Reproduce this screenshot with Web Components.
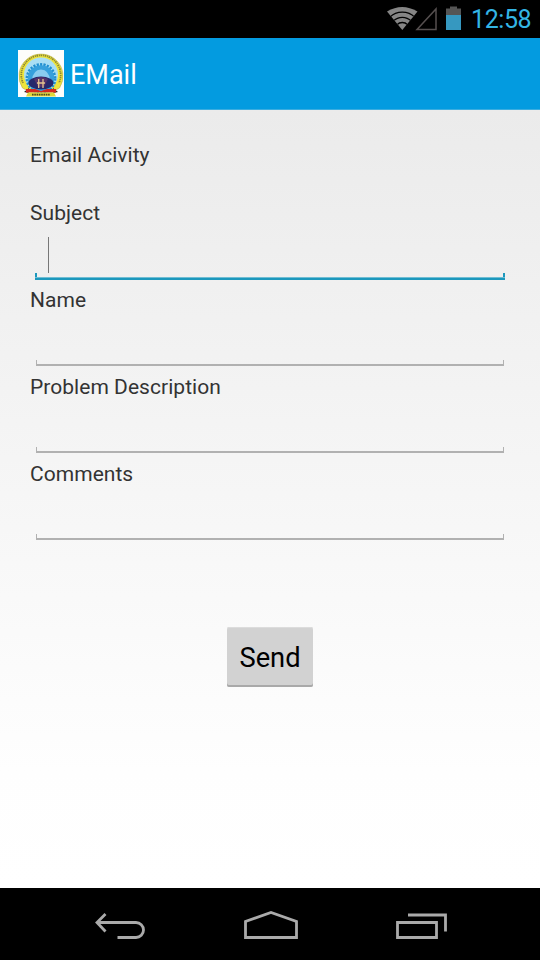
<!DOCTYPE html>
<html lang="en">
<head>
<meta charset="utf-8">
<title>EMail</title>
<style>
html,body{margin:0;width:540px;height:960px;overflow:hidden;background:#000;font-family:Roboto,"Noto Sans",sans-serif}
</style>
</head>
<body>
<email-screen></email-screen>
<script>
function define(name, html) {
  const t = document.createElement('template');
  t.innerHTML = html;
  customElements.define(name, class extends HTMLElement {
    constructor() {
      super();
      this.attachShadow({ mode: 'open' }).append(t.content.cloneNode(true));
    }
  });
}

define('status-bar', `
<style>
:host{display:flex;height:38px;box-sizing:border-box;justify-content:flex-end;background:#000;color:#33b5e5;padding-right:9px}
svg{display:block}
span{font-size:25px;line-height:40px;letter-spacing:-.4px;width:60px;white-space:nowrap}
</style>
<svg width="85" height="38" viewBox="386 0 85 38">
  <defs><clipPath id="w"><path d="M402.300 30L387 11.500Q402 2.500 417.500 11.500Z"/></clipPath></defs>
  <g clip-path="url(#w)"><rect x="386" y="5" width="32" height="26" fill="#858585"/>
  <g fill="none" stroke="#000" stroke-width="1.300"><circle cx="402.300" cy="30" r="17.800"/><circle cx="402.300" cy="30" r="12.700"/><circle cx="402.300" cy="30" r="7.500"/></g></g>
  <path d="M417 29.500L436 9V29.500Z" fill="none" stroke="#554f4f" stroke-width="1.500"/>
  <path d="M446 8.500h4v-2h7v2h4v6.500h-15z" fill="#555"/>
  <path d="M446 15h15v15h-15z" fill="#3698c0"/>
</svg><span><slot></slot></span>`);

define('college-emblem', `
<style>:host{display:block;width:46px;height:47px}svg{display:block}</style>
<svg width="46" height="47" viewBox="0 0 46 47">
  <rect width="46" height="47" fill="#fdfdfb"/>
  <path d="M4.500 38A22 22 0 1 1 41.500 38L34 42H12Z" fill="#eee43c" stroke="#b3ab55" stroke-width=".6"/>
  <path d="M5 33A19.700 19.700 0 1 1 41 33" fill="none" stroke="#8d8735" stroke-width="1.800" stroke-dasharray="1 .7 1.600 .8"/>
  <circle cx="23" cy="24.500" r="17" fill="#a9def4"/>
  <circle cx="23" cy="28.500" r="14" fill="none" stroke="#218fd0" stroke-width="2.800" stroke-dasharray="2.200 1.200"/>
  <circle cx="23" cy="28.500" r="13.300" fill="#36a0dc"/>
  <path d="M14 30Q15 20 23 19.500Q31 20 32 30Z" fill="#8accef"/>
  <ellipse cx="23" cy="33" rx="12.500" ry="6.500" fill="#27286b"/>
  <path d="M16 29Q23 25 30 29L26 37H20Z" fill="#54336a"/>
  <path d="M20.700 29v9M25 29v9M19 33h8" stroke="#e4c48f" stroke-width="1.300"/>
  <path d="M6 42l5-4v5zM40 42l-5-4v5z" fill="#26251c"/>
  <path d="M8 39h9l6 2 6-2h9v3.500H8z" fill="#d4291f"/>
  <path d="M10 42.500h26l2 4H8z" fill="#ded83b"/>
  <path d="M14 44.700h18" stroke="#544a22" stroke-width="1.800" stroke-dasharray="1.600 .7"/>
</svg>`);

define('action-bar', `
<style>
:host{display:flex;height:72px;box-sizing:border-box;padding:12px 18px;gap:6px;background:#039be0;color:#fff;border-bottom:1px solid #3bade0}
h1{margin:0;font-size:27px;font-weight:400;line-height:50px}
</style>
<college-emblem></college-emblem><h1><slot></slot></h1>`);

define('form-label', `
<style>:host{display:block;height:28px;line-height:28px;font-size:21px;letter-spacing:.04px;color:#333;white-space:nowrap}</style>
<slot></slot>`);

define('text-field', `
<style>
:host{display:flex;flex-direction:column;height:59px;box-sizing:border-box;padding:46px 6px 0;--line:#b1b1b1}
i{display:block;height:6px;box-sizing:border-box;border:solid var(--line);border-width:0 1px 2px}
.caret{display:none}
:host([focused]){padding:10px 5px 0;--line:#1c98bd}
:host([focused]) i{height:7px;border:0;background:linear-gradient(#1c98bd,#1c98bd) 0 5px/100% 2px no-repeat,linear-gradient(#70bdd3,#70bdd3) 0 4px/100% 1px no-repeat,linear-gradient(var(--line),var(--line)) 0 0/2px 100% no-repeat,linear-gradient(var(--line),var(--line)) 100% 0/2px 100% no-repeat}
:host([focused]) .caret{display:block;width:1px;height:36px;margin-left:13px;background:#777}
</style>
<div class="caret"></div><i></i>`);

define('send-button', `
<style>
:host{display:block;align-self:center}
button{display:block;width:86px;height:60px;padding:2px 0 0;border:0;border-radius:2px;background:#d2d2d2;box-shadow:inset 0 1px #dcdcdc,inset 0 -2px #a9a9a9;font:27.300px/58px Roboto,sans-serif;color:#000}
</style>
<button type="button"><slot></slot></button>`);

define('nav-bar', `
<style>
:host{display:flex;height:72px;background:#000;justify-content:space-between;padding:0 91px 0 94px}
svg{display:block}
g{fill:none;stroke:#aaa;stroke-width:2.800}
</style>
<svg width="52" height="72" viewBox="94 888 52 72"><g><path d="M105.500 914L97 922.500L105.500 931.500M97 922.500H136A7.500 7.500 0 0 1 136 937.500H117.500"/></g></svg>
<svg width="56" height="72" viewBox="242 888 56 72"><g><path d="M244.500 937.500V921.500L270 912.500L295.500 921.500V937.500Z"/></g></svg>
<svg width="54" height="72" viewBox="395 888 54 72"><g><path d="M397.500 922.500H436.500V937.500H397.500ZM408 915H445.500V931.500"/></g></svg>`);

define('email-screen', `
<style>
:host{display:flex;flex-direction:column;width:540px;height:960px}
main{flex:1;display:flex;flex-direction:column;padding:31px 30px 0;background:linear-gradient(#ebebeb,#fefefe 85%,#fff)}
.title{margin-bottom:30px}
send-button{margin-top:80px}
</style>
<status-bar>12:58</status-bar>
<action-bar>EMail</action-bar>
<main>
  <form-label class="title">Email Acivity</form-label>
  <form-label>Subject</form-label><text-field focused></text-field>
  <form-label>Name</form-label><text-field></text-field>
  <form-label>Problem Description</form-label><text-field></text-field>
  <form-label>Comments</form-label><text-field></text-field>
  <send-button>Send</send-button>
</main>
<nav-bar></nav-bar>`);
</script>
</body>
</html>
